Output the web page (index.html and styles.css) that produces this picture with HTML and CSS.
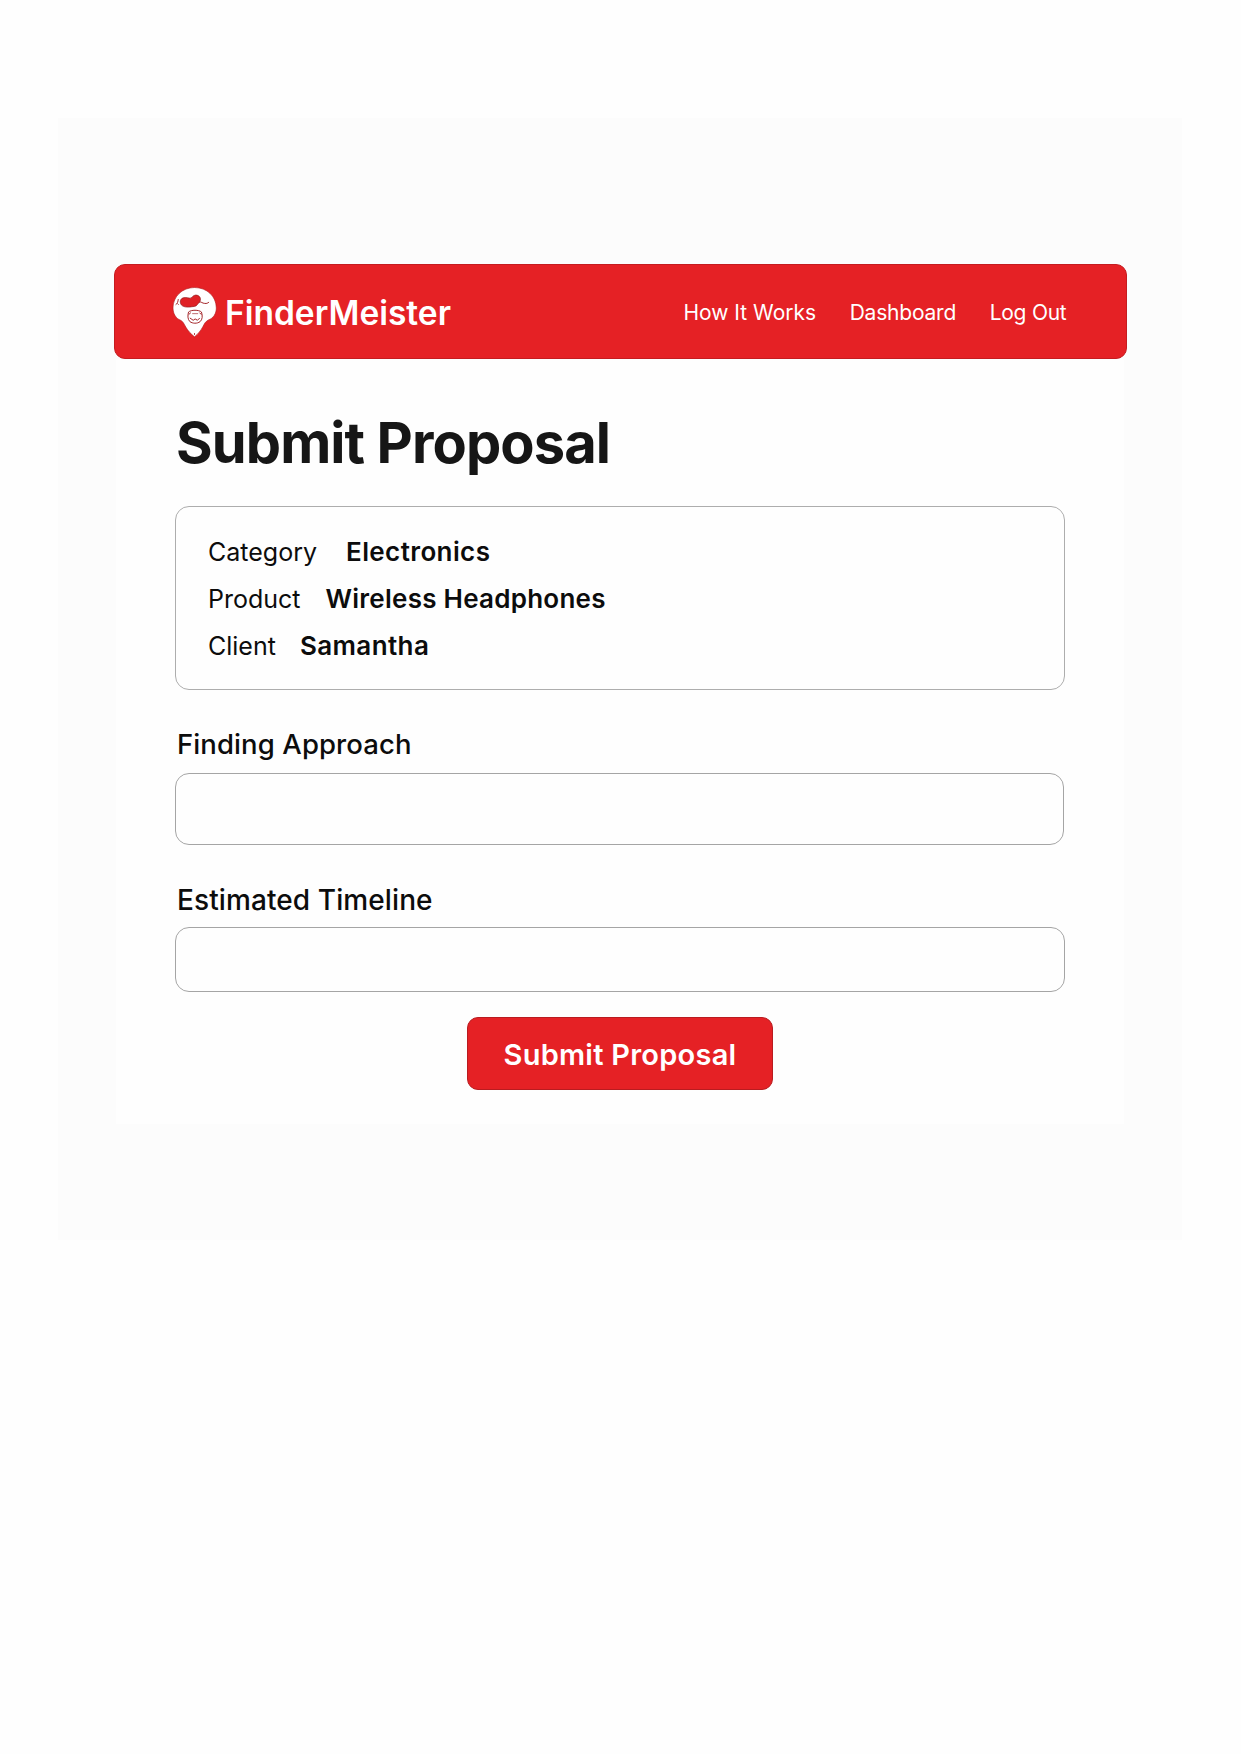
FILE: index.html
```html
<!DOCTYPE html>
<html lang="en">
<head>
<meta charset="utf-8">
<title>Submit Proposal – FinderMeister</title>
<link rel="stylesheet" href="styles.css">
</head>
<body>
<div class="canvas">
  <header class="navbar">
    <a class="brand">
      <svg class="brand-logo" viewBox="22 18 136 156" aria-hidden="true">
        <path class="pin" d="M90 22C53 22 25 49 25 84C25 101 34 116 48 121C56 125 58 132 64 142C70 153 79 162 90 171C101 162 109 152 115 141C120 131 123 125 132 120C147 115 156 101 156 84C156 49 128 22 90 22Z"/>
        <path class="mark" d="M47 66C47 53 59 50 74 54C82 56 84 46 92 45C101 44 109 50 108 59C107 67 101 70 99 73C95 81 84 79 76 81C63 82 48 80 47 66Z"/>
        <path class="line" d="M41 57C40 65 39 70 33 74M38 70L42 74M104 66C111 64 113 70 121 70C127 71 130 69 134 66"/>
        <path class="line" d="M72 96C80 89 103 89 111 96C115 108 114 119 107 125C98 132 84 131 76 125C69 118 69 106 72 96ZM72 104L79 98M111 104L105 98M76 114L86 121L92 117L99 121L106 114"/>
        <path class="line thin" d="M83 101H101"/>
        <path class="line" d="M90 160V165"/>
      </svg>
      <span class="brand-name">FinderMeister</span>
    </a>
    <nav class="links">
      <a class="how">How It Works</a>
      <a class="dash">Dashboard</a>
      <a class="logout">Log Out</a>
    </nav>
  </header>
  <main class="panel">
    <h1 class="title">Submit Proposal</h1>
    <dl class="summary">
      <div class="row category"><dt>Category</dt><dd>Electronics</dd></div>
      <div class="row product"><dt>Product</dt><dd>Wireless Headphones</dd></div>
      <div class="row client"><dt>Client</dt><dd>Samantha</dd></div>
    </dl>
    <form class="form">
      <label class="label approach-label" for="approach">Finding Approach</label>
      <input class="field approach" id="approach" type="text">
      <label class="label timeline-label" for="timeline">Estimated Timeline</label>
      <input class="field timeline" id="timeline" type="text">
      <button class="submit" type="button">Submit Proposal</button>
    </form>
  </main>
</div>
</body>
</html>
```
FILE: styles.css
```css
* { box-sizing: border-box; }
body { margin: 0; background: #fefefe; color: #0c0c0c; font-family: Inter, "Liberation Sans", sans-serif; }
.canvas { width: 1124px; height: 1122px; margin: 118px 0 0 58px; padding: 146px 56px 0; background: #fcfcfc; }
.navbar { display: flex; align-items: center; justify-content: space-between; width: 1013px; height: 95px; padding: 1px 59.5px 0 57px; background: #e52125; border: 1px solid #c51c20; border-radius: 11px; }
.brand { display: flex; align-items: center; gap: 8px; color: #fff; }
.brand-logo { width: 45px; height: 52px; }
.pin { fill: #fff; stroke: #b5181c; stroke-width: 2; }
.mark { fill: #df2125; stroke: #8e1a1d; stroke-width: 2; }
.line { fill: none; stroke: #a32529; stroke-width: 3; }
.thin { stroke-width: 2; }
.brand-name { padding-top: 1px; font-size: 33.5px; font-weight: 600; }
.links { display: flex; padding-top: 1px; gap: 33.5px; color: #fff; font-size: 21px; }
.dash { letter-spacing: -0.2px; }
.logout { letter-spacing: -0.25px; }
.panel { height: 765px; margin: 0 2px; padding: 52px 59px 0; background: #fefefe; }
.title { margin: 0 0 31px 1px; font-size: 56px; font-weight: 700; line-height: 64px; letter-spacing: -0.9px; color: #161616; }
.summary { width: 890px; height: 184px; margin: 0; padding: 22px 32px; border: 1px solid #adadad; border-radius: 14px; }
.row { display: flex; height: 46.8px; line-height: 46.8px; }
dt { font-size: 25px; }
dd { margin: 0 0 0 29px; font-size: 26px; font-weight: 600; letter-spacing: 0.4px; }
.product dd { margin-left: 25px; letter-spacing: 0.25px; }
.client dd { margin-left: 24px; }
.form { display: flex; flex-direction: column; }
.label { margin: 37px 0 12px 2px; font-size: 27.5px; font-weight: 500; line-height: 34px; letter-spacing: 0.1px; }
.timeline-label { margin-top: 38px; margin-bottom: 10px; font-size: 28px; }
.field { width: 889px; height: 72px; border: 1px solid #a5a5a5; border-radius: 14px; background: transparent; }
.timeline { width: 890px; height: 65px; }
.submit { width: 306px; height: 73px; margin: 25px 0 0 292px; padding: 2px 0 0; border: 1px solid #b91c20; border-radius: 11px; background: #e52125; color: #fff; font: 600 29px/1 Inter, sans-serif; letter-spacing: 0.25px; }
```
